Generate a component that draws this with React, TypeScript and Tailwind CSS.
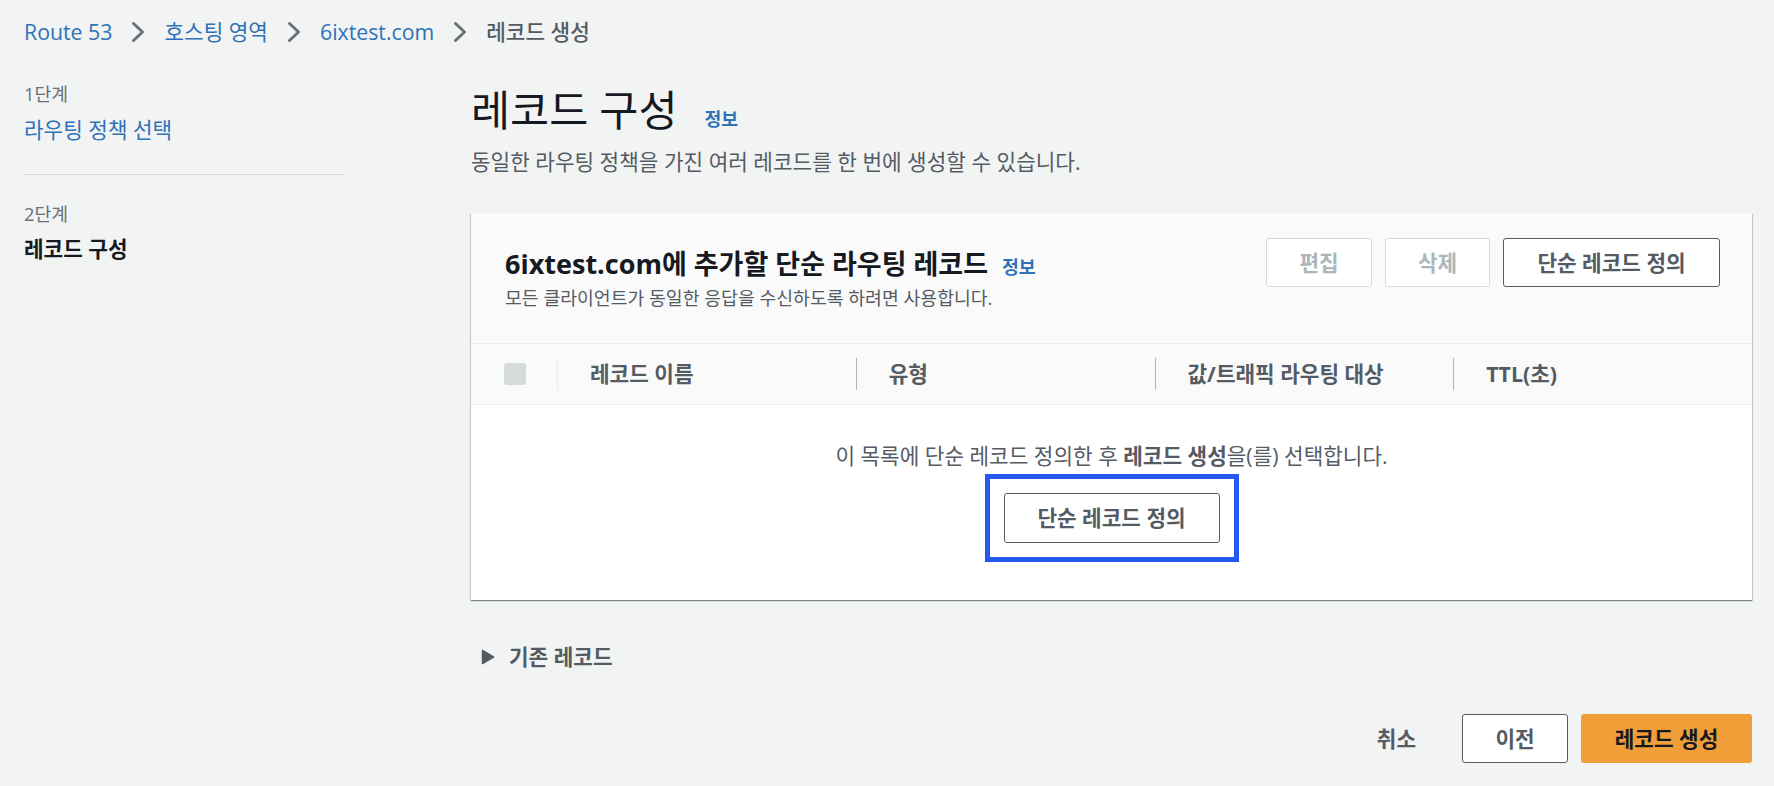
import React from "react";

const Chevron = () => (
  <svg width="14" height="22" viewBox="0 0 14 22" className="shrink-0">
    <polyline
      points="2.5,2.5 11.5,11 2.5,19.5"
      fill="none"
      stroke="#687078"
      strokeWidth="3"
      strokeLinecap="round"
      strokeLinejoin="round"
    />
  </svg>
);

const Caret = () => (
  <svg width="14" height="16" viewBox="0 0 14 16" className="shrink-0">
    <path d="M1.5 1.5 L12.5 8 L1.5 14.5 Z" fill="#545b64" stroke="#545b64" strokeWidth="1.5" strokeLinejoin="round" />
  </svg>
);

const columns = ["레코드 이름", "유형", "값/트래픽 라우팅 대상", "TTL(초)"];

const App = () => {
  return (
    <div className="min-h-screen w-full bg-[#f2f3f3] font-['Open_Sans','Noto_Sans_CJK_KR',sans-serif] text-[#16191f]">
      {/* breadcrumbs */}
      <nav className="flex h-[64px] items-center gap-[19px] pl-[24px] text-[21.3px]">
        <span className="text-[#2e72b8]">Route 53</span>
        <Chevron />
        <span className="text-[#2e72b8]">호스팅 영역</span>
        <Chevron />
        <span className="text-[#2e72b8]">6ixtest.com</span>
        <Chevron />
        <span className="font-medium text-[#545b64]">레코드 생성</span>
      </nav>

      <div className="flex">
        {/* wizard steps */}
        <aside className="ml-[24px] w-[320px] shrink-0 pt-[18px]">
          <div className="text-[18.3px] leading-[24px] text-[#687078]">1단계</div>
          <div className="mt-[10px] text-[21.3px] leading-[28px] text-[#2e72b8]">라우팅 정책 선택</div>
          <div className="mt-[30px] h-px bg-[#d5dbdb]" />
          <div className="mt-[27px] text-[18.3px] leading-[24px] text-[#687078]">2단계</div>
          <div className="mt-[9px] text-[21.3px] font-bold leading-[28px]">레코드 구성</div>
        </aside>

        <main className="ml-[127px] w-[1281px] shrink-0">
          <div className="mt-[22px] flex items-baseline">
            <h1 className="text-[42.5px] font-normal leading-[48px]">레코드 구성</h1>
            <span className="ml-[27px] text-[18.3px] font-bold text-[#2e72b8]">정보</span>
          </div>
          <p className="mt-[14px] text-[21.3px] leading-[28px] text-[#545b64]">
            동일한 라우팅 정책을 가진 여러 레코드를 한 번에 생성할 수 있습니다.
          </p>

          {/* records container */}
          <div className="mt-[37px] bg-white shadow-[0_1px_1px_0_rgba(0,28,36,0.3),1px_1px_1px_0_rgba(0,28,36,0.15),-1px_1px_1px_0_rgba(0,28,36,0.15)]">
            <div className="flex h-[130px] items-start justify-between bg-[#fafafa] pl-[34px] pr-[32px] pt-[25px]">
              <div className="mt-[9px]">
                <div className="flex items-baseline">
                  <h2 className="text-[27px] font-bold leading-[34px]">6ixtest.com에 추가할 단순 라우팅 레코드</h2>
                  <span className="ml-[14px] text-[18.3px] font-bold text-[#2e72b8]">정보</span>
                </div>
                <p className="mt-[5px] text-[18.3px] leading-[24px] text-[#545b64]">
                  모든 클라이언트가 동일한 응답을 수신하도록 하려면 사용합니다.
                </p>
              </div>
              <div className="flex gap-[13px]">
                <button className="h-[49px] w-[106px] rounded-[3px] border border-[#d5dbdb] bg-white text-[21.3px] font-bold text-[#aab7b8]">
                  편집
                </button>
                <button className="h-[49px] w-[105px] rounded-[3px] border border-[#d5dbdb] bg-white text-[21.3px] font-bold text-[#aab7b8]">
                  삭제
                </button>
                <button className="h-[49px] w-[217px] rounded-[3px] border border-[#545b64] bg-white text-[21.3px] font-bold text-[#545b64]">
                  단순 레코드 정의
                </button>
              </div>
            </div>

            {/* table header */}
            <div className="grid h-[62px] grid-cols-[86px_1fr_1fr_1fr_1fr] border-y border-[#eaeded] bg-[#fafafa]">
              <div className="flex items-center pl-[33px]">
                <span className="h-[22px] w-[22px] rounded-[3px] bg-[#d5dbdb]" />
              </div>
              {columns.map((col, i) => (
                <div key={col} className="flex items-center">
                  <span className={`h-[32px] w-px ${i === 0 ? "bg-[#eaeded]" : "bg-[#aab7b8]"}`} />
                  <span className="ml-[32px] text-[21.3px] font-bold text-[#545b64]">{col}</span>
                </div>
              ))}
            </div>

            {/* empty state */}
            <div className="flex flex-col items-center pb-[38px] pt-[37px]">
              <p className="text-[21.3px] leading-[28px] text-[#545b64]">
                이 목록에 단순 레코드 정의한 후 <b>레코드 생성</b>을(를) 선택합니다.
              </p>
              <div className="mt-[4px] border-[5px] border-[#2458f0] p-[14px]">
                <button className="block h-[50px] w-[216px] rounded-[3px] border border-[#545b64] bg-white text-[21.3px] font-bold text-[#545b64]">
                  단순 레코드 정의
                </button>
              </div>
            </div>
          </div>

          {/* existing records */}
          <div className="ml-[10px] mt-[43px] flex h-[28px] items-center gap-[14px]">
            <Caret />
            <span className="text-[21.3px] font-bold text-[#545b64]">기존 레코드</span>
          </div>

          {/* footer actions */}
          <div className="mt-[43px] flex items-center justify-end">
            <span className="mr-[46px] text-[21.3px] font-bold text-[#545b64]">취소</span>
            <button className="h-[49px] w-[106px] rounded-[3px] border border-[#545b64] bg-white text-[21.3px] font-bold text-[#545b64]">
              이전
            </button>
            <button className="ml-[13px] h-[49px] w-[171px] rounded-[3px] bg-[#f29e38] text-[21.3px] font-bold text-[#16191f]">
              레코드 생성
            </button>
          </div>
        </main>
      </div>
    </div>
  );
};

export default App;
